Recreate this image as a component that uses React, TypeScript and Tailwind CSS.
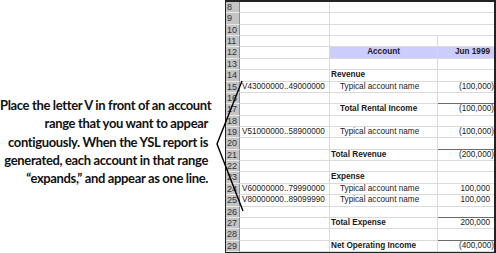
import React from "react";

type Row = {
  n: number;
  a?: string;
  b?: string;
  c?: string;
  bold?: boolean;
  indent?: boolean;
  center?: boolean;
  hl?: boolean;
  rule?: "full" | "c";
};

const typical = "Typical account name";

const rows: Row[] = [
  { n: 8 },
  { n: 9 },
  { n: 10 },
  { n: 11 },
  { n: 12, hl: true, b: "Account", c: "Jun 1999", bold: true, center: true },
  { n: 13 },
  { n: 14, b: "Revenue", bold: true },
  { n: 15, a: "V43000000..49000000", b: typical, indent: true, c: "(100,000)" },
  { n: 16 },
  { n: 17, b: "Total Rental Income", bold: true, indent: true, c: "(100,000)", rule: "c" },
  { n: 18 },
  { n: 19, a: "V51000000..58900000", b: typical, indent: true, c: "(100,000)" },
  { n: 20 },
  { n: 21, b: "Total Revenue", bold: true, c: "(200,000)", rule: "full" },
  { n: 22 },
  { n: 23, b: "Expense", bold: true },
  { n: 24, a: "V60000000..79990000", b: typical, indent: true, c: "100,000" },
  { n: 25, a: "V80000000..89099990", b: typical, indent: true, c: "100,000" },
  { n: 26 },
  { n: 27, b: "Total Expense", bold: true, c: "200,000", rule: "full" },
  { n: 28 },
  { n: 29, b: "Net Operating Income", bold: true, c: "(400,000)", rule: "full" },
];

const heights = [
  "h-[11px]", "h-[12px]", "h-[11px]", "h-[11px]", "h-[12px]", "h-[11px]",
  "h-[12px]", "h-[11px]", "h-[11px]", "h-[12px]", "h-[11px]", "h-[11px]",
  "h-[12px]", "h-[11px]", "h-[11px]", "h-[12px]", "h-[11px]", "h-[12px]",
  "h-[11px]", "h-[11px]", "h-[12px]", "h-[11px]",
];

const GRID = "border-[#dadada]";
const DARK = "border-[#6a6a6a]";

export default function App() {
  return (
    <div className="relative w-[496px] h-[253px] bg-white overflow-hidden flex">
      <div className="w-[208px] shrink-0 pt-[96px] text-right text-[13px] leading-[18.3px] font-bold text-[#111] tracking-[-0.35px] whitespace-nowrap [font-family:'Lato',sans-serif]">
        <div>Place the letter V in front of an account</div>
        <div>range that you want to appear</div>
        <div>contiguously. When the YSL report is</div>
        <div>generated, each account in that range</div>
        <div>“expands,” and appear as one line.</div>
      </div>
      <div className="w-[17px] shrink-0" />
      <div className="w-[271px] h-[253px] shrink-0 border-t-2 border-l border-r-2 border-b border-[#222] flex flex-col [font-family:'Liberation_Sans',Arial,sans-serif] text-[8.2px] text-[#1a1a1a]">
        {rows.map((r, i) => {
          const next = rows[i + 1];
          const bBorder = next && next.rule === "full" ? DARK : GRID;
          const cBorder = next && next.rule ? DARK : GRID;
          const vLine = r.n >= 11 ? "border-r " + GRID : "";
          return (
            <div key={r.n} className={"flex shrink-0 " + heights[i]}>
              <div className="w-[14px] shrink-0 bg-[#c4c4c4] border-b border-r border-b-[#e8e8e8] border-r-[#8a8a8a] flex items-center pl-[1px] text-[9px] leading-none text-[#333]">
                {r.n}
              </div>
              <div className={"w-[90px] shrink-0 border-b border-r " + GRID + " flex items-center pl-[2px] leading-none whitespace-nowrap"}>
                {r.a}
              </div>
              <div
                className={
                  "w-[108px] shrink-0 border-b flex items-center leading-none whitespace-nowrap " +
                  bBorder + " " + vLine + " " +
                  (r.hl ? "bg-[#ccccff] " : "") +
                  (r.center ? "justify-center " : r.indent ? "pl-[10px] " : "pl-[1px] ") +
                  (r.bold ? "font-bold" : "")
                }
              >
                {r.b}
              </div>
              <div
                className={
                  "w-[56px] shrink-0 border-b flex items-center justify-end leading-none whitespace-nowrap " +
                  cBorder + " " +
                  (r.hl ? "bg-[#ccccff] pr-[4px] font-bold " : r.c && !r.c.startsWith("(") ? "pr-[4px] " : "pr-[0px] ")
                }
              >
                {r.c}
              </div>
            </div>
          );
        })}
      </div>
      <svg className="absolute left-0 top-0" width="496" height="253" viewBox="0 0 496 253">
        <polyline points="242,81 217,144 243,211" fill="none" stroke="#000" strokeWidth="1.4" />
      </svg>
    </div>
  );
}
